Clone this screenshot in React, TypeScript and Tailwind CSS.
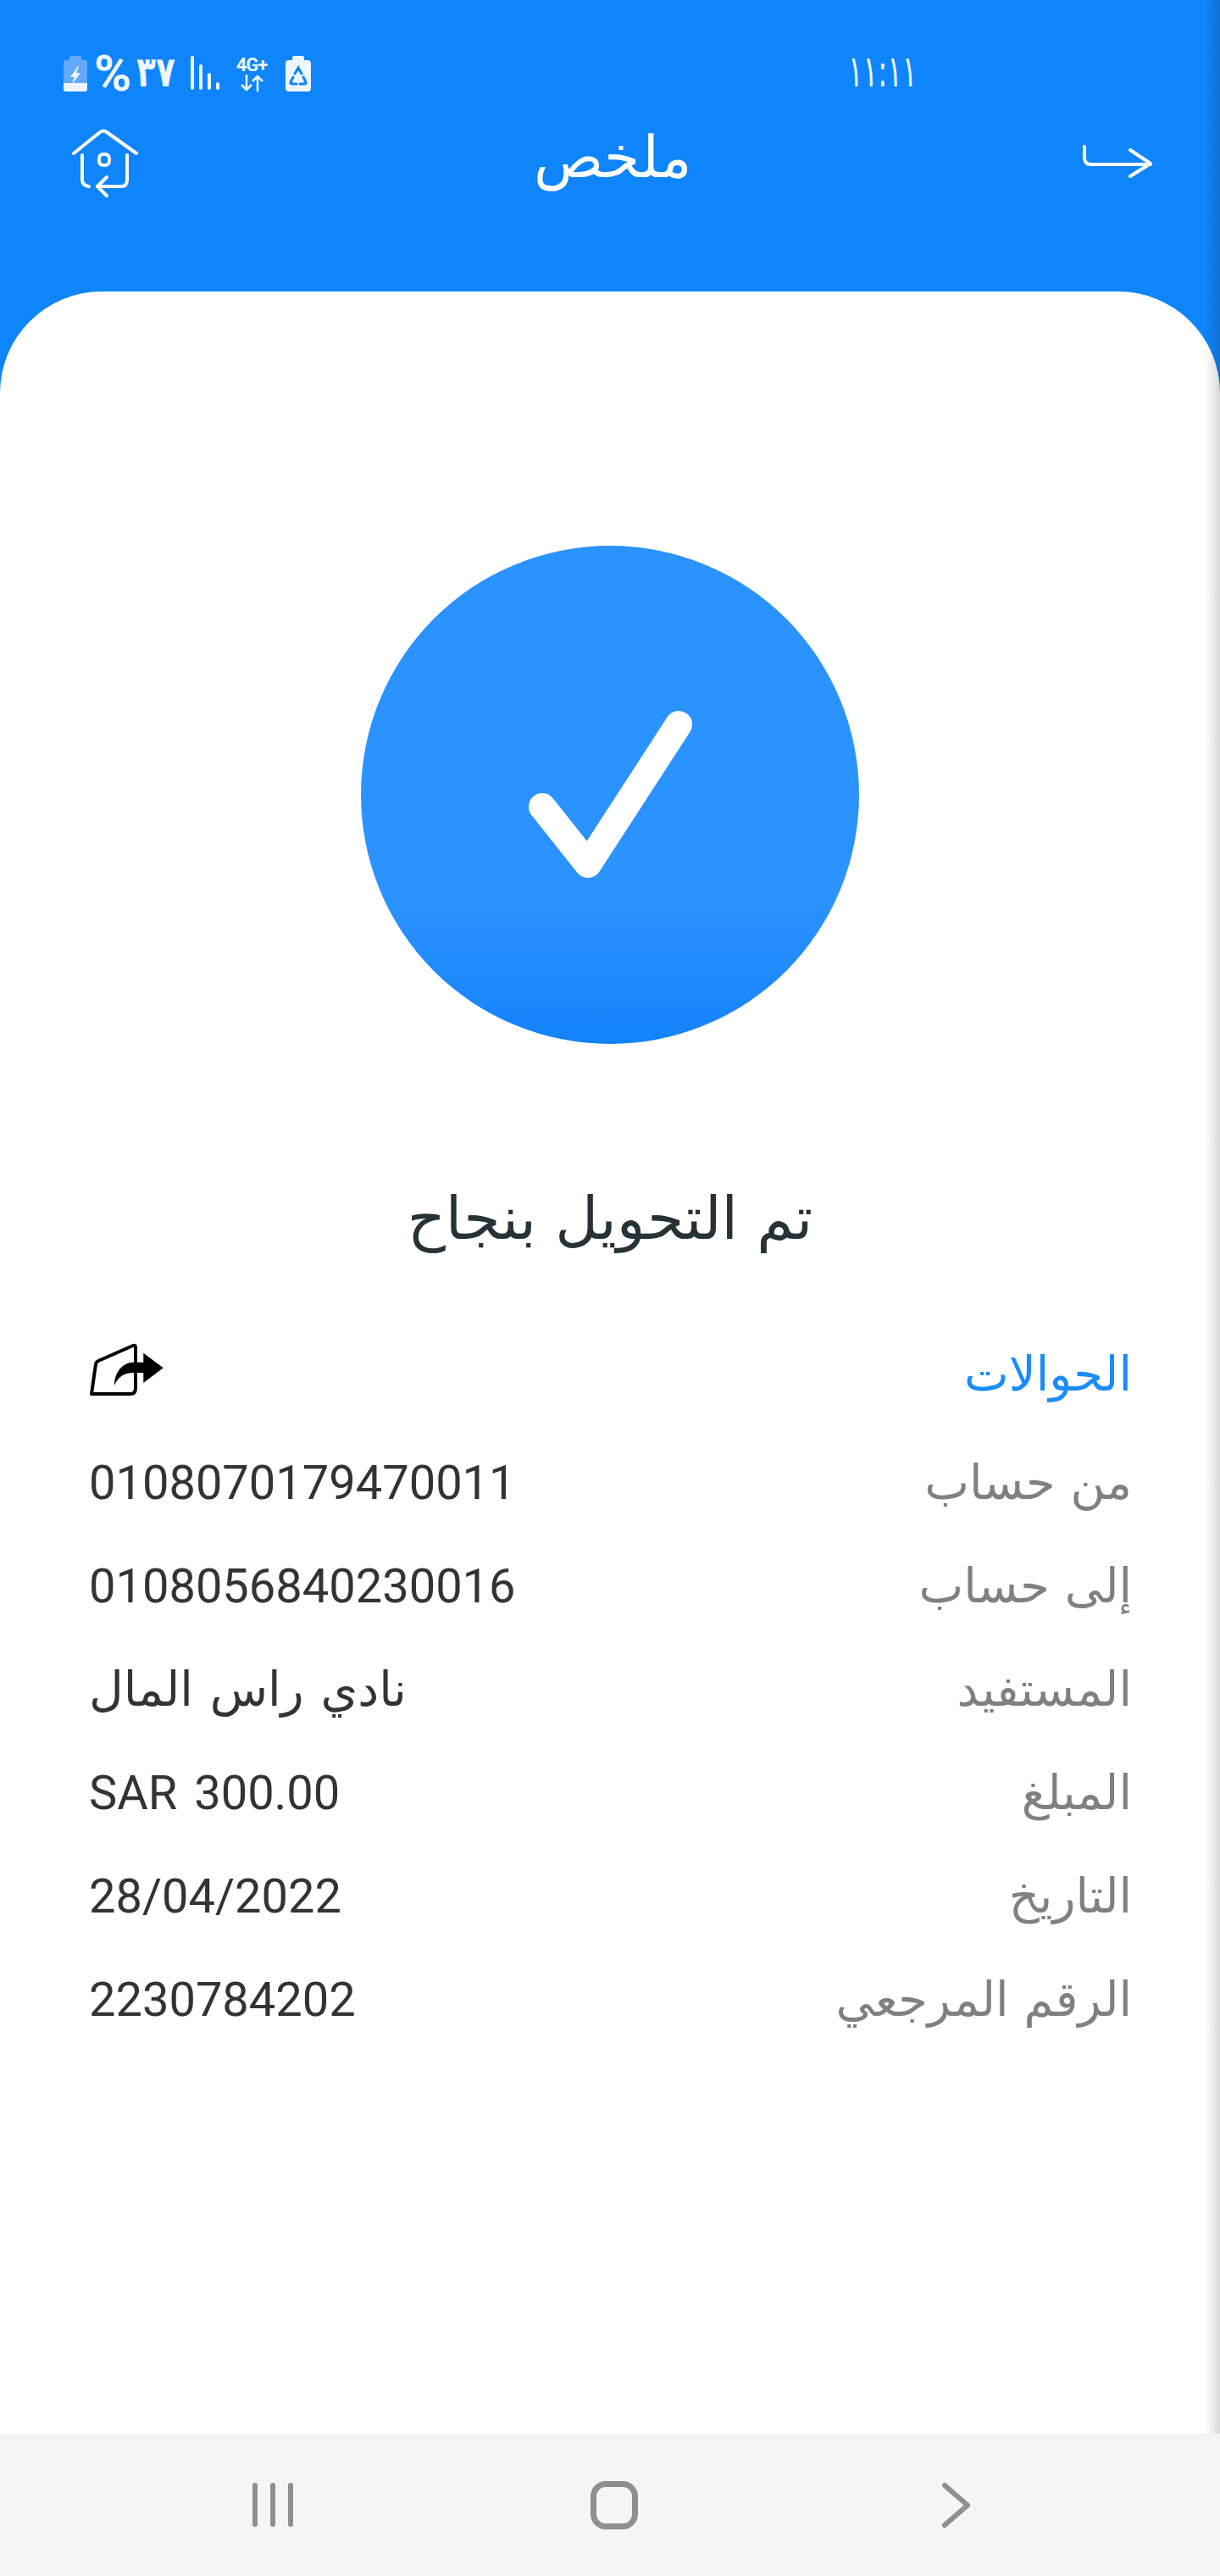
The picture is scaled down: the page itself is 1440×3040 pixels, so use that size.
import React from 'react';

const arabicFont = { fontFamily: '"DejaVu Sans", sans-serif' };

const rows = [
    { label: 'من حساب', value: '0108070179470011' },
    { label: 'إلى حساب', value: '0108056840230016' },
    { label: 'المستفيد', value: 'نادي راس المال' },
    { label: 'المبلغ', value: 'SAR 300.00' },
    { label: 'التاريخ', value: '28/04/2022' },
    { label: 'الرقم المرجعي', value: '2230784202' },
];

const StatusBar: React.FC = () => (
    <div className="flex h-[42px] pl-[75px] text-[#eef6ff]">
        <div className="flex w-[926px] items-start">
            <svg width="28" height="42" viewBox="0 0 28 42">
                <path d="M9 0h10a2 2 0 0 1 2 2v3h4a3 3 0 0 1 3 3v24H0V8a3 3 0 0 1 3-3h4V2a2 2 0 0 1 2-2z" fill="#63aaff" />
                <path d="M0 32h28v7a3 3 0 0 1-3 3H3a3 3 0 0 1-3-3z" fill="#eaf5ff" />
                <path d="M17 12l-9 13h5l-4 10 11-15h-5l3-8z" fill="#eaf5ff" />
            </svg>
            <span className="ml-[8px] w-[46px] font-['Roboto'] text-[60px] leading-[42px] font-bold tracking-[-2px]">%</span>
            <span className="ml-[4px] inline-block w-[44px] origin-left scale-x-[0.75] text-[50px] leading-[38px] font-bold" style={arabicFont}>٣٧</span>
            <div className="ml-[20px] flex h-[40px] items-end gap-[6px]">
                <span className="h-[40px] w-[4px] rounded-full bg-[#eef6ff]" />
                <span className="h-[30px] w-[4px] rounded-full bg-[#eef6ff]" />
                <span className="h-[20px] w-[4px] rounded-full bg-[#eef6ff]" />
                <span className="h-[9px] w-[4px] rounded-full bg-[#eef6ff]" />
            </div>
            <div className="ml-[16px] flex w-[44px] flex-col items-center">
                <span className="font-['Roboto'] text-[22px] leading-[22px] font-bold tracking-[-1px]">4G+</span>
                <svg width="32" height="20" viewBox="0 0 32 20" fill="none" stroke="#eef6ff" strokeWidth="2.5">
                    <path d="M10 0v18M4 12l6 6 6-6" />
                    <path d="M23 20V2M17 8l6-6 6 6" />
                </svg>
            </div>
            <svg className="ml-[18px]" width="30" height="42" viewBox="0 0 30 42">
                <path d="M10 0h10a2 2 0 0 1 2 2v3h4a4 4 0 0 1 4 4v29a4 4 0 0 1-4 4H4a4 4 0 0 1-4-4V9a4 4 0 0 1 4-4h4V2a2 2 0 0 1 2-2z" fill="#eef6ff" />
                <path d="M11 21l4-7 4 7M9 25l-3 6q-1 2 2 2h5M17 33h5q3 0 2-2l-3-6" fill="none" stroke="#0f85fb" strokeWidth="3" strokeLinecap="round" />
            </svg>
        </div>
        <span className="inline-block origin-left scale-x-[0.63] text-[52px] leading-[36px]" style={arabicFont}>١١:١١</span>
    </div>
);

const HomeIcon: React.FC = () => (
    <svg width="80" height="85" viewBox="0 0 80 85" fill="none" stroke="#fff" strokeWidth="4" strokeLinecap="round" strokeLinejoin="round">
        <path d="M2 31L33 6Q37 3 41 6L76 31" />
        <path d="M12 33V62Q12 69 20 70" />
        <path d="M65 33V62Q65 70 58 70H30" />
        <path d="M41 59L30 70L41 81" />
        <rect x="32" y="32" width="12" height="13" rx="5" />
    </svg>
);

const BackIcon: React.FC = () => (
    <svg className="-mt-[4px]" width="86" height="44" viewBox="0 0 86 44" fill="none" stroke="#fff" strokeWidth="4" strokeLinecap="round" strokeLinejoin="round">
        <path d="M4 4V17Q4 25 12 25H82" />
        <path d="M58 8L82 24L58 39" />
    </svg>
);

const ShareIcon: React.FC = () => (
    <svg className="-mt-[10px]" width="90" height="67" viewBox="0 0 90 67">
        <path d="M3 61L8 26Q8.500 23 11 22L52 4Q55 3 55 6V54Q55 61 49 61Z" fill="none" stroke="#000" strokeWidth="4" strokeLinejoin="round" />
        <path d="M30 51C30 35 40 24 52 23.700H64.300V12.700L87.700 30.300L64.300 48V36H52C42 36 34 41 30 51Z" fill="#000" />
    </svg>
);

const App: React.FC = () => {
    return (
        <div className="relative flex h-[3040px] w-[1440px] flex-col overflow-hidden bg-[#0f85fb]">
            <div className="h-[344px] pt-[66px]">
                <StatusBar />
                <div className="mt-[42px] grid h-[85px] grid-cols-3 items-center pr-[78px] pl-[85px]">
                    <HomeIcon />
                    <div className="-translate-y-[7px] text-center text-[68px] leading-[85px] font-light text-white" dir="rtl" style={arabicFont}>ملخص</div>
                    <div className="flex justify-end">
                        <BackIcon />
                    </div>
                </div>
            </div>

            <div className="flex flex-1 flex-col items-center rounded-t-[120px] bg-white pt-[300px]">
                <div className="flex h-[588px] w-[588px] items-center justify-center rounded-full bg-linear-to-b from-[#2b93ff] from-70% to-[#1283fb]">
                    <svg width="588" height="588" viewBox="0 0 588 588" fill="none" stroke="#fff" strokeWidth="32" strokeLinecap="round" strokeLinejoin="round">
                        <path d="M214 308L268 376L375 211" />
                    </svg>
                </div>

                <h1 className="mt-[154px] h-[104px] text-[70px] leading-[104px] font-normal text-[#263238]" dir="rtl" style={arabicFont}>تم التحويل بنجاح</h1>

                <div className="mt-[71px] w-full pr-[104px] pl-[105px]">
                    <div className="mb-[6px] flex h-[122px] items-center justify-between">
                        <ShareIcon />
                        <span className="text-[56px] text-[#1a8cfa]" dir="rtl" style={arabicFont}>الحوالات</span>
                    </div>
                    {rows.map((row) => (
                        <div key={row.label} className="flex h-[122px] items-center justify-between">
                            <span className="font-['Roboto','DejaVu_Sans',sans-serif] text-[56px] [word-spacing:6px] text-[#333333]">{row.value}</span>
                            <span className="text-[56px] text-[#808080]" dir="rtl" style={arabicFont}>{row.label}</span>
                        </div>
                    ))}
                </div>
            </div>

            {/* soft shade along the right edge */}
            <div className="absolute top-0 right-0 h-[2872px] w-[18px] bg-linear-to-r from-transparent to-black/15" />

            <div className="absolute right-0 bottom-0 left-0 flex h-[168px] items-center justify-center bg-[#f5f5f5] pl-[10px]">
                <div className="flex w-[403px] justify-center gap-[15px]">
                    <span className="h-[52px] w-[6px] rounded-full bg-[#8f8f8f]" />
                    <span className="h-[52px] w-[6px] rounded-full bg-[#8f8f8f]" />
                    <span className="h-[52px] w-[6px] rounded-full bg-[#8f8f8f]" />
                </div>
                <div className="flex w-[403px] justify-center">
                    <span className="h-[57px] w-[56px] rounded-[18px] border-[7px] border-[#8f8f8f]" />
                </div>
                <div className="flex w-[403px] justify-center">
                    <svg width="33" height="53" viewBox="0 0 33 53" fill="none" stroke="#8f8f8f" strokeWidth="6" strokeLinecap="round" strokeLinejoin="round">
                        <path d="M3 3L30 26.500L3 50" />
                    </svg>
                </div>
            </div>
        </div>
    );
};

export default App;
